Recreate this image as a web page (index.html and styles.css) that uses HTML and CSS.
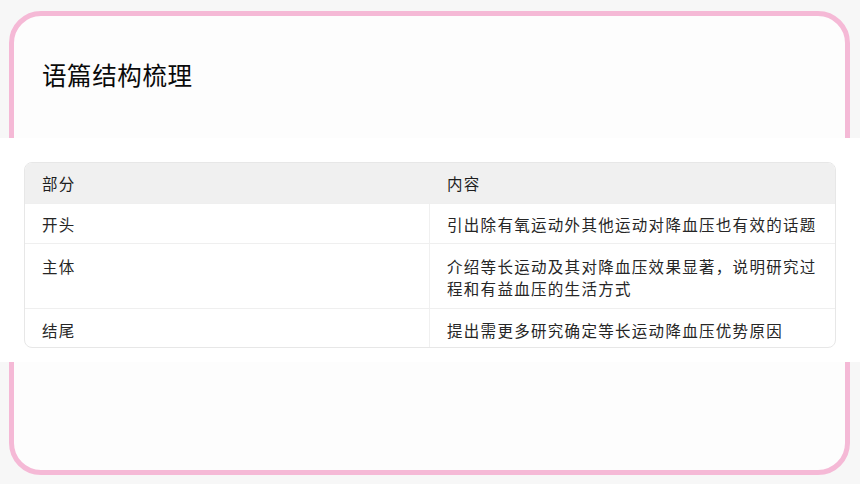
FILE: index.html
```html
<!DOCTYPE html>
<html lang="zh-CN">
<head>
<meta charset="utf-8">
<title>语篇结构梳理</title>
<link rel="stylesheet" href="styles.css">
</head>
<body>
<div class="page">
  <div class="frame">
    <h1 class="title">语篇结构梳理</h1>
  </div>
  <div class="band">
    <table class="outline">
      <thead>
        <tr class="row-head"><th class="col-part">部分</th><th class="col-content">内容</th></tr>
      </thead>
      <tbody>
        <tr class="row-1"><td class="col-part">开头</td><td class="col-content">引出除有氧运动外其他运动对降血压也有效的话题</td></tr>
        <tr class="row-2"><td class="col-part">主体</td><td class="col-content">介绍等长运动及其对降血压效果显著，说明研究过程和有益血压的生活方式</td></tr>
        <tr class="row-3"><td class="col-part">结尾</td><td class="col-content">提出需更多研究确定等长运动降血压优势原因</td></tr>
      </tbody>
    </table>
  </div>
</div>
</body>
</html>
```
FILE: styles.css
```css
* { box-sizing: border-box; }
html, body { margin: 0; padding: 0; }
body {
  background: #f7f7f7;
  font-family: "Noto Sans CJK SC", "Noto Sans", sans-serif;
}
.page {
  position: relative;
  width: 860px;
  height: 484px;
  padding: 11px 10px 9px 9px;
}
.frame {
  height: 464px;
  border: 5px solid #f5b9d6;
  border-radius: 32px;
  background: #fdfdfd;
  padding: 44px 0 0 28px;
}
.title {
  margin: 0;
  font-size: 24.5px;
  line-height: 30px;
  font-weight: 400;
  letter-spacing: 0.6px;
  color: #0a0a0a;
}
.band {
  position: absolute;
  top: 138px;
  left: 0;
  width: 860px;
  height: 224px;
  background: #ffffff;
  padding: 24px 24px 0 24px;
}
.outline {
  width: 812px;
  border-collapse: separate;
  border-spacing: 0;
  border: 1px solid #e7e7e7;
  border-radius: 8px;
  overflow: hidden;
  font-size: 15.5px;
  letter-spacing: 1.3px;
  color: #262626;
  table-layout: fixed;
}
.outline th, .outline td {
  text-align: left;
  vertical-align: top;
  padding: 9px 17px 0 17px;
  line-height: 22px;
  font-weight: 400;
}
.outline td { border-top: 1px solid #efefef; }
.outline .col-part { width: 405px; border-right: 1px solid #f0f0f0; }
.outline th { background: #f0f0f0; color: #1e1e1e; }
.row-head { height: 40px; }
.row-1 { height: 40px; }
.row-2 { height: 65px; }
.row-2 td { padding-top: 11px; }
.row-3 { height: 39px; }
.row-3 td { padding-top: 10px; }
```
